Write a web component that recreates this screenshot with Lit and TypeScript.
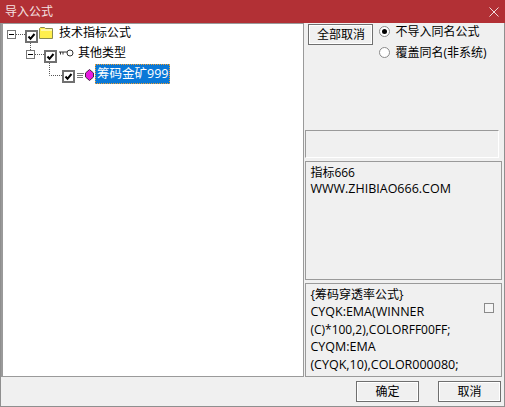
import { LitElement, html, css, svg } from "lit";
import { customElement } from "lit/decorators.js";

const check = html`<svg class="cb" width="13" height="13" viewBox="0 0 13 13"><rect x="1" y="1" width="11" height="11" fill="#fff" stroke="#707070" stroke-width="2"/><path d="M3.500 6.500l2 2.300L9.500 4" fill="none" stroke="#000" stroke-width="2"/></svg>`;

@customElement("app-root")
export class AppRoot extends LitElement {
  static styles = css`
    :host { display: block; width: 505px; height: 407px; background: #f0f0f0; overflow: hidden;
      font-family: "Open Sans", "Noto Sans CJK SC", sans-serif; font-size: 12px; color: #000; line-height: 16px; }
    .win { display: flex; flex-direction: column; height: 407px; box-sizing: border-box; border: 1px solid #8f8f8f; border-top: 0; }
    .title { height: 23px; margin: 0 -1px; flex: none; background: #b23035; color: #f4e2e2; display: flex; align-items: center;
      justify-content: space-between; padding: 0 6px 0 5px; font-size: 12px; }
    .main { flex: none; height: 354px; display: flex; gap: 2px; }
    .treebox { position: relative; width: 304px; box-sizing: border-box; background: #fff; border: 1px solid #9a9a9a; border-left-width: 2px; }
    .lines { position: absolute; left: -3px; top: -1px; overflow: visible; }
    .row { position: relative; height: 20px; display: flex; align-items: flex-start; white-space: nowrap; }
    .r1 { padding-left: 22px; }
    .r2 { padding-left: 41px; }
    .r3 { padding-left: 59px; }
    .cb { flex: none; margin-top: 6px; }
    .ic { flex: none; }
    .folder { margin: 2px 0 0 1px; }
    .key { margin: 5px 0 0 2px; }
    .gem { margin: 5px 0 0 2px; }
    .lb { margin: 1px 0 0 5px; }
    .k { margin-left: 4px; }
    .sel { margin-left: 1px; height: 20px; line-height: 20px; padding: 0 2px; box-sizing: border-box; background: #0a78d7; color: #fff; outline: 1px dotted #f0a030; outline-offset: -1px; font-size: 12.500px; }
    .right { width: 198px; display: flex; flex-direction: column; }
    .opts { height: 107px; flex: none; display: flex; align-items: flex-start; gap: 6px; padding: 1px 0 0 2px; box-sizing: border-box; }
    button { font: inherit; color: inherit; margin: 0; padding: 0; background: #f0f0f0; }
    .all { width: 65px; height: 21px; border: 1px solid #6f6f6f; box-shadow: inset 0 0 0 1px #fff; }
    .radios { display: flex; flex-direction: column; gap: 4px; margin-top: -1px; }
    .radio { display: flex; align-items: center; gap: 5px; height: 17px; white-space: nowrap; }
    .dot { width: 9px; height: 9px; border-radius: 50%; background: #fff; border: 1px solid #8a8a8a; position: relative; }
    .dot.on::after { content: ""; position: absolute; inset: 2px; background: #000; border-radius: 50%; }
    .blank { height: 28px; box-sizing: border-box; flex: none; margin-left: -1px; width: 194px; border: 1px solid #9a9a9a; border-right-color: #fff; border-bottom-color: #fff; }
    .box { border: 1px solid #9a9a9a; box-sizing: border-box; padding: 3px 4px; margin-left: -1px; width: 197px; }
    .b1 { height: 119px; margin-top: 3px; flex: none; }
    .b2 { height: 94px; margin-top: 3px; flex: none; position: relative; line-height: 17.4px; padding-top: 2px; }
    .line { display: block; white-space: nowrap; }
    .lat { font-size: 12.500px; }
    .sq { position: absolute; right: 7px; top: 19px; width: 8px; height: 8px; border: 1px solid #8a8a8a; background: #f5f5f5; }
    .foot { flex: 1; display: flex; justify-content: flex-end; gap: 19px; padding: 4px 3px 0 0; }
    .foot button { width: 63px; height: 21px; border: 1px solid #6f6f6f; box-shadow: inset 0 0 0 1px #fff; }
  `;

  render() {
    return html`<div class="win">
      <div class="title"><span>导入公式</span>
        <svg width="10" height="10" viewBox="0 0 10 10"><path d="M.5.5l9 9M9.500.5l-9 9" stroke="#f0dcdc" fill="none"/></svg></div>
      <div class="main">
        <div class="treebox">
          <svg class="lines" width="110" height="90" viewBox="0 23 110 90">
            ${svg`
              <path d="M16 34.500h9M30.500 43v8M35 54.500h9M49.500 63v12.500H62" fill="none" stroke="#555" stroke-dasharray="1 1"/>
              <rect x="7.500" y="30.500" width="8" height="8" fill="#fff" stroke="#777"/><path d="M9 34.500h5" stroke="#000"/>
              <rect x="26.500" y="50.500" width="8" height="8" fill="#fff" stroke="#777"/><path d="M28 54.500h5" stroke="#000"/>
            `}
          </svg>
          <div class="row r1">${check}
            <svg class="ic folder" width="15" height="13" viewBox="0 0 15 13"><path d="M.5 12.500v-10l1-1h4l1 1h7v10z" fill="#ffef4d" stroke="#8a8a50"/><path d="M2 4h11" stroke="#fff"/></svg>
            <span class="lb">技术指标公式</span></div>
          <div class="row r2">${check}
            <svg class="ic key" width="15" height="8" viewBox="0 0 15 8"><path d="M0 3h8M1.500 3v2.500M4 3v2.500" stroke="#333" fill="none"/><circle cx="11" cy="4" r="3" fill="#fff" stroke="#333"/></svg>
            <span class="lb k">其他类型</span></div>
          <div class="row r3">${check}
            <svg class="ic gem" width="17" height="12" viewBox="0 0 17 12"><path d="M0 4.500h7M0 6.500h6M0 8.500h6" stroke="#777" fill="none"/><path d="M12.500.5l4 3.500v4l-4 3.500-4-3.500V4z" fill="#e81ae0" stroke="#402040"/></svg>
            <span class="sel">筹码金矿999</span></div>
        </div>
        <div class="right">
          <div class="opts">
            <button class="all">全部取消</button>
            <div class="radios">
              <div class="radio"><span class="dot on"></span>不导入同名公式</div>
              <div class="radio"><span class="dot"></span>覆盖同名(非系统)</div>
            </div>
          </div>
          <div class="blank"></div>
          <div class="box b1"><span class="line">指标666</span><span class="line lat">WWW.ZHIBIAO666.COM</span></div>
          <div class="box b2">
            <span class="line">{筹码穿透率公式}</span><span class="line lat">CYQK:EMA(WINNER</span><span class="line">(C)*100,2),COLORFF00FF;</span><span class="line lat">CYQM:EMA</span><span class="line lat">(CYQK,10),COLOR000080;</span>
            <span class="sq"></span>
          </div>
        </div>
      </div>
      <div class="foot"><button>确定</button><button>取消</button></div>
    </div>`;
  }
}
